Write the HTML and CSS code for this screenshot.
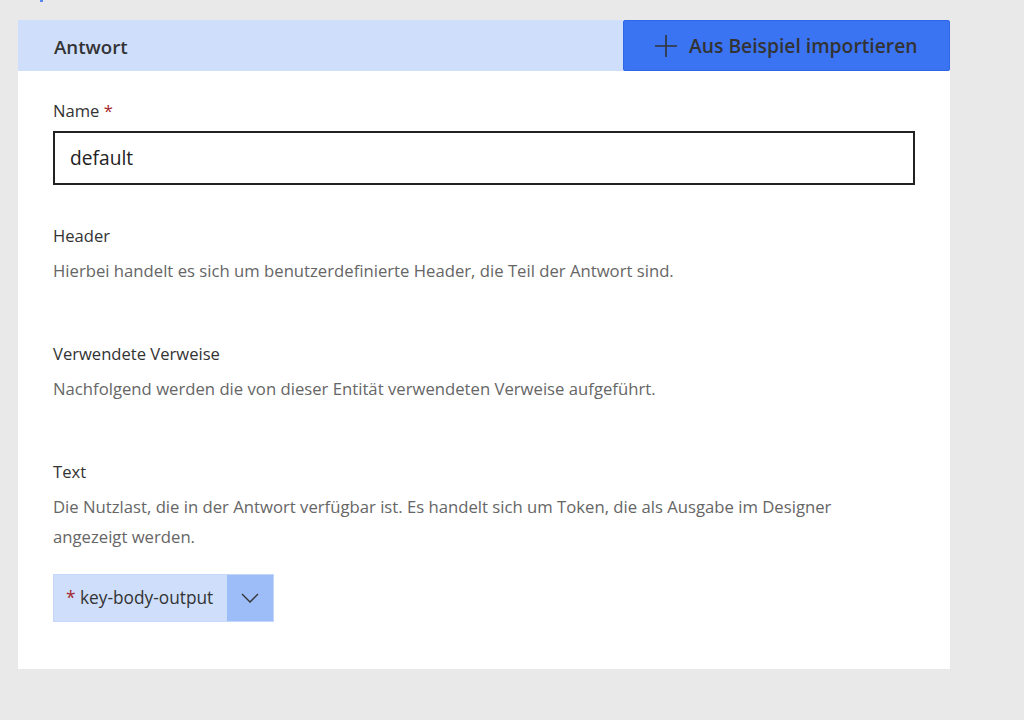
FILE: index.html
```html
<!DOCTYPE html>
<html lang="de">
<head>
<meta charset="utf-8">
<title>Antwort</title>
<link rel="stylesheet" href="styles.css">
</head>
<body>
<span class="peek"></span>
<div class="card">
  <div class="card-head">
    <h2 class="title">Antwort</h2>
    <button class="import-btn">
      <svg class="plus" width="22" height="22" viewBox="0 0 22 22"><path d="M11 0V22M0 11H22" stroke="#333" stroke-width="1.6" fill="none"/></svg>
      <span>Aus Beispiel importieren</span>
    </button>
  </div>
  <div class="card-body">
    <div class="field">
      <label class="label">Name <span class="req">*</span></label>
      <div class="input">default</div>
    </div>
    <div class="section first">
      <div class="label">Header</div>
      <p class="desc">Hierbei handelt es sich um benutzerdefinierte Header, die Teil der Antwort sind.</p>
    </div>
    <div class="section">
      <div class="label">Verwendete Verweise</div>
      <p class="desc">Nachfolgend werden die von dieser Entität verwendeten Verweise aufgeführt.</p>
    </div>
    <div class="section">
      <div class="label">Text</div>
      <p class="desc">Die Nutzlast, die in der Antwort verfügbar ist. Es handelt sich um Token, die als Ausgabe im Designer angezeigt werden.</p>
    </div>
    <div class="token">
      <span class="token-text"><span class="req">*</span> key-body-output</span>
      <span class="token-chev">
        <svg width="18" height="10" viewBox="0 0 18 10"><path d="M1 1L9 9L17 1" stroke="#333" stroke-width="1.3" fill="none"/></svg>
      </span>
    </div>
  </div>
</div>
</body>
</html>
```
FILE: styles.css
```css
html, body {
  margin: 0;
  padding: 0;
}
body {
  background: #e9e9e9;
  font-family: "Open Sans", "Noto Sans", sans-serif;
  color: #333;
  width: 1024px;
  height: 720px;
  overflow: hidden;
  position: relative;
}
.peek {
  position: absolute;
  left: 40px;
  top: 0;
  width: 3px;
  height: 2px;
  background: #5a86f0;
}
.card {
  margin: 20px 0 0 18px;
  width: 932px;
  background: #fff;
}
.card-head {
  display: flex;
  height: 51px;
  background: #cfdffb;
}
.title {
  flex: 1;
  margin: 0;
  padding-left: 36px;
  font-size: 18.7px;
  font-weight: 600;
  line-height: 53px;
  color: #333;
}
.import-btn {
  width: 327px;
  height: 51px;
  border: 1px solid #2f66e6;
  border-radius: 2px;
  background: #3b74f3;
  display: flex;
  align-items: center;
  gap: 12px;
  padding: 0 0 0 31px;
  font-family: inherit;
  font-size: 19.3px;
  font-weight: 600;
  color: #333;
  box-sizing: border-box;
}
.card-body {
  padding: 29px 35px 47px 35px;
}
.label {
  display: block;
  font-size: 16.6px;
  line-height: 22px;
  color: #333;
}
.req {
  color: #a4262c;
}
.field .label {
  margin-bottom: 9px;
}
.input {
  width: 862px;
  height: 54px;
  box-sizing: border-box;
  border: 2px solid #222;
  padding: 0 15px;
  font-size: 19.2px;
  line-height: 50px;
  color: #222;
}
.section {
  margin-top: 57px;
}
.section.first {
  margin-top: 40px;
}
.desc {
  margin: 9px 0 0;
  font-size: 16.7px;
  line-height: 30px;
  color: #666;
  max-width: 820px;
}
.token {
  margin-top: 22px;
  display: inline-flex;
  height: 48px;
  border: 1px solid #c4d7fa;
  background: #cfdffb;
  box-sizing: border-box;
}
.token-text {
  padding: 0 14px 0 12px;
  font-size: 17.3px;
  line-height: 46px;
  color: #333;
}
.token-chev {
  width: 46px;
  background: #9dbdf9;
  display: flex;
  align-items: center;
  justify-content: center;
}
```
